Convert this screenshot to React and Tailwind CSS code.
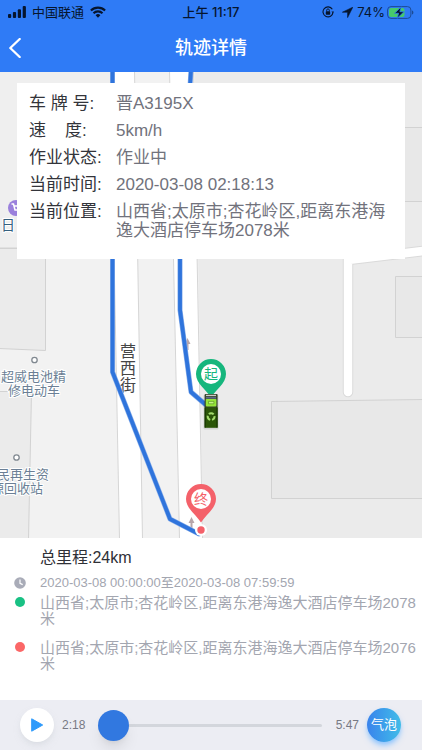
import React from 'react';

const FONT = 'font-["Liberation_Sans","Noto_Sans_CJK_SC",sans-serif]';

const DETAILS = [
  { label: '车 牌 号:', value: '晋A3195X' },
  { label: '速\u00a0\u00a0\u00a0\u00a0度:', value: '5km/h' },
  { label: '作业状态:', value: '作业中' },
  { label: '当前时间:', value: '2020-03-08 02:18:13' },
  { label: '当前位置:', value: '山西省;太原市;杏花岭区,距离东港海逸大酒店停车场2078米' },
];

const STOPS = [
  { dot: 'bg-[#19c184]', address: '山西省;太原市;杏花岭区,距离东港海逸大酒店停车场2078米' },
  { dot: 'bg-[#fb6767]', address: '山西省;太原市;杏花岭区,距离东港海逸大酒店停车场2076米' },
];

function StatusBar() {
  return (
    <div className='h-6 px-2 grid grid-cols-[1fr_auto_1fr] items-center font-["Inter","Noto_Sans_CJK_SC",sans-serif] text-[13px] leading-6 text-[#06152e]'>
      <div className="flex items-center gap-1.5">
        <svg className="w-[18px] h-3" viewBox="0 0 18 12" fill="#06152e">
          <rect x="0" y="8" width="3.2" height="4" rx="1" />
          <rect x="4.9" y="6" width="3.2" height="6" rx="1" />
          <rect x="9.8" y="3.2" width="3.2" height="8.8" rx="1" />
          <rect x="14.7" y="0" width="3.2" height="12" rx="1" />
        </svg>
        <span>中国联通</span>
        <svg className="w-4 h-3" viewBox="0 0 16 12" fill="none" stroke="#06152e" strokeWidth="2.1">
          <path d="M.9 4.5a10.1 10.1 0 0 1 14.2 0" />
          <path d="M3.5 7.2a6.4 6.4 0 0 1 9 0" />
          <path d="M8 11.8 5.6 9.3a3.4 3.4 0 0 1 4.8 0z" fill="#06152e" stroke="none" />
        </svg>
      </div>
      <div className="font-medium">上午 11:17</div>
      <div className="flex items-center justify-end">
        <svg className="w-3 h-3 mr-2" viewBox="0 0 12 12" fill="none" stroke="#06152e" strokeWidth="1.1">
          <path d="M10.3 3.3A5 5 0 1 0 11 6.4" />
          <path d="M9.4 5.6 11 7.3l1-1.9z" fill="#06152e" stroke="none" />
          <rect x="3.8" y="5.3" width="4.4" height="3.4" rx=".6" fill="#06152e" stroke="none" />
          <path d="M4.7 5.4V4.2a1.3 1.3 0 0 1 2.6 0v1.2" strokeWidth=".9" />
        </svg>
        <svg className="w-[11px] h-[11px] mr-1" viewBox="0 0 11 11" fill="#06152e">
          <path d="M10.8.2.4 5.2h5.2v5.4z" stroke="#06152e" strokeWidth=".6" strokeLinejoin="round" />
        </svg>
        <span>74%</span>
        <svg className="w-[27px] h-[13px] ml-0.5" viewBox="0 0 27 13">
          <rect x=".6" y=".6" width="23.3" height="11.8" rx="3.4" fill="none" stroke="#1c4b94" strokeWidth="1" />
          <rect x="2" y="2" width="15.5" height="9" rx="2" fill="#47c96b" />
          <path d="M25 4.4v4.2c.9-.3 1.4-1.1 1.4-2.1S25.9 4.7 25 4.4z" fill="#1c4b94" />
          <path d="M14.2.8 7.6 7.3h4l-1.4 5 6.8-6.6h-4.1z" fill="#06152e" stroke="#2f7bf6" strokeWidth=".8" />
        </svg>
      </div>
    </div>
  );
}

function TitleBar() {
  return (
    <div className="h-12 grid grid-cols-[1fr_auto_1fr] items-center text-white">
      <button aria-label="返回" className="w-8 h-8 flex items-center justify-start pl-[9px]">
        <svg className="w-3 h-5" viewBox="0 0 12 20" fill="none" stroke="currentColor" strokeWidth="2.3" strokeLinecap="round" strokeLinejoin="round">
          <path d="M10.7 1 1.3 10l9.4 9" />
        </svg>
      </button>
      <h1 className="text-lg leading-6 font-medium">轨迹详情</h1>
    </div>
  );
}

function Pin({ x, y, color, children }) {
  return (
    <g transform={`translate(${x} ${y})`}>
      <path d="M0 23.5C-4.5 16-15 9.5-15 0a15 15 0 0 1 30 0C15 9.5 4.5 16 0 23.5z" fill={color} />
      <circle r="10" fill="#fff" />
      <text y="5" fontSize="14" textAnchor="middle" fill={color}>{children}</text>
    </g>
  );
}

function Truck() {
  return (
    <g transform="translate(204 394)">
      <rect x="-.5" y=".5" width="15" height="35" rx="1.5" fill="#000" opacity=".1" />
      <rect x=".6" y="0" width="13" height="14" rx="1" fill="#39452f" />
      <rect x="2" y=".8" width="10" height="1.3" fill="#c9cfc4" />
      <rect x="2" y="3" width="10" height="1.6" fill="#5a6a86" />
      <rect x="1.8" y="5" width="10.6" height="7.4" rx=".8" fill="#96e63a" />
      <path d="M4.5 7.4h5.4v2.4H4.5z" fill="#c4f584" stroke="#4f8d16" strokeWidth=".6" />
      <rect x=".6" y="13.4" width="13" height="20.4" fill="#2b5508" />
      <path d="M1.2 13.4v20M13 13.4v20" stroke="#183603" strokeWidth="1.2" />
      <circle cx="7.1" cy="22.6" r="3.4" fill="none" stroke="#a3dc6c" strokeWidth="2" strokeDasharray="5.2 1.9" strokeDashoffset="1" />
    </g>
  );
}

function TrackMap() {
  return (
    <svg className="absolute inset-0 w-full h-full" viewBox="0 72 422 466" preserveAspectRatio="xMidYMid slice" role="img" aria-label="轨迹地图">
      <rect y="72" width="422" height="466" fill="#f2f2f2" />
      <path d="M195 72H422V538H203z" fill="#ebebeb" />

      {/* buildings */}
      <g fill="#ebebeb" stroke="#d2d2d2">
        <path d="M-1 71H111V248H-1z" fill="#efefef" />
        <path d="M-1 248.500H45.500V350.500L-1 348.500z" />
        <path d="M-1 391.500H31.500L28.500 540H-1z" />
        <path d="M380 127.500H423V201.500H380z" fill="#e8e8e8" />
        <path d="M395.500 276.500H423V337.500H395.500z" fill="#e8e8e8" />
        <path d="M271.500 401.500L423 399.500V498.500H271.500z" fill="#e8e8e8" />
      </g>

      {/* roads */}
      <g fill="#fff" stroke="#d6d6d6">
        <path d="M110.500 71H134.500L142.500 539H119.500z" />
        <path d="M169.500 71H193.500L202.500 539H179.500z" />
      </g>
      <path d="M423 251L348 260V392" fill="none" stroke="#dadada" strokeWidth="10.500" strokeLinecap="round" />
      <path d="M423 251L348 260V392" fill="none" stroke="#fff" strokeWidth="8.500" strokeLinecap="round" />
      <g fill="#b7a5aa">
        <path d="M187.500 338l3 6h-2v6h-2v-6h-2zM191.500 517l3 6h-2v6h-2v-6h-2z" />
      </g>

      {/* places */}
      <g fontSize="13" fill="#6b7f95" stroke="#fff" strokeWidth="2" paintOrder="stroke">
        <text x="1" y="381">超威电池精</text>
        <text x="8" y="395">修电动车</text>
        <text x="49" y="479" textAnchor="end">民再生资</text>
        <text x="43" y="493" textAnchor="end">源回收站</text>
        <text x="1" y="230" fontSize="14" fill="#35607f">日</text>
      </g>
      <g fill="#fff" stroke="#808890" strokeWidth="1.300">
        <circle cx="34.500" cy="360" r="2.700" />
        <circle cx="16.500" cy="457.500" r="2.700" />
      </g>
      <circle cx="16" cy="208" r="8" fill="#9a80dc" />
      <path d="M11.500 204h2l1.500 6h5M14 206h6" fill="none" stroke="#fff" strokeWidth="1.500" />
      <g fontSize="16" fill="#454545" stroke="#fff" strokeWidth="2" paintOrder="stroke" textAnchor="middle">
        <text x="128" y="357">营</text>
        <text x="128" y="374">西</text>
        <text x="128" y="391">街</text>
      </g>

      {/* driven track */}
      <g fill="none" strokeLinejoin="round" strokeLinecap="round">
        <path d="M112.500 70V372L170 519L199 534M191 70L180 250V310L191 392L206 405" stroke="#8bb0ea" strokeWidth="5" />
        <path d="M112.500 70V372L170 519L199 534M191 70L180 250V310L191 392L206 405" stroke="#2f74dc" strokeWidth="3.800" />
      </g>

      <Pin x={211} y={374} color="#16b67d">起</Pin>
      <Truck />
      <circle cx="201" cy="530" r="6" fill="#fff" />
      <circle cx="201" cy="530" r="3.700" fill="#f4616a" />
      <Pin x={201} y={499} color="#f4616a">终</Pin>
    </svg>
  );
}

function DetailCard() {
  return (
    <dl className="relative mx-[17px] mt-[11px] pt-[11px] pb-[19px] pl-3 pr-4 flex flex-col gap-2 bg-white text-[17px] leading-[19px]">
      {DETAILS.map(({ label, value }) => (
        <div key={label} className="flex">
          <dt className="w-[87px] shrink-0 text-[#33343a] whitespace-nowrap">{label}</dt>
          <dd className="text-[#71727c] break-all">{value}</dd>
        </div>
      ))}
    </dl>
  );
}

function Summary() {
  return (
    <section className="h-[162px] pt-[11px] pl-3.5 bg-white text-[#a3a6b0]">
      <h2 className="pl-[26px] text-base leading-[18px] text-[#2f3036]">总里程:24km</h2>
      <div className="mt-2 flex items-center text-[13px] leading-4">
        <span className="w-[26px] shrink-0">
          <svg className="w-3 h-3" viewBox="0 0 12 12">
            <circle cx="6" cy="6" r="5.800" fill="#a9acb8" />
            <path d="M6 2.500V6.300L8.700 7.600" fill="none" stroke="#fff" strokeWidth="1.200" />
          </svg>
        </span>
        <span>2020-03-08 00:00:00至2020-03-08 07:59:59</span>
      </div>
      <ul className="mt-1 flex flex-col gap-[13px] text-[15px] leading-4">
        {STOPS.map(({ dot, address }) => (
          <li key={address} className="flex">
            <span className="w-[26px] shrink-0 pt-0.5 pl-px">
              <span className={`block w-2.5 h-2.5 rounded-full ${dot}`} />
            </span>
            <span className="pr-1 break-all">{address}</span>
          </li>
        ))}
      </ul>
    </section>
  );
}

function Player() {
  return (
    <footer className="h-[50px] pl-5 pr-[21px] flex items-center bg-[#ecedf3] text-xs text-[#777983]">
      <button aria-label="播放" className="w-[34px] h-[34px] shrink-0 rounded-full bg-white shadow-md shadow-gray-300/50 flex items-center justify-center">
        <svg className="w-3 h-3.5" viewBox="0 0 12 14" fill="#2f9bfb" stroke="#2f9bfb" strokeWidth="1" strokeLinejoin="round">
          <path d="M.7.8v12.400L11.700 7z" />
        </svg>
      </button>
      <span className="ml-2 w-9">2:18</span>
      <input
        type="range"
        aria-label="播放进度"
        min="0"
        max="100"
        defaultValue="0"
        className="min-w-0 flex-1 h-8 appearance-none bg-transparent [&::-webkit-slider-runnable-track]:h-[3px] [&::-webkit-slider-runnable-track]:rounded-full [&::-webkit-slider-runnable-track]:bg-[#d3d6dc] [&::-webkit-slider-thumb]:appearance-none [&::-webkit-slider-thumb]:-mt-3.5 [&::-webkit-slider-thumb]:w-[31px] [&::-webkit-slider-thumb]:h-[31px] [&::-webkit-slider-thumb]:rounded-full [&::-webkit-slider-thumb]:bg-[#3178e0] [&::-webkit-slider-thumb]:shadow-lg"
      />
      <span className="ml-3.5">5:47</span>
      <button className="ml-2 w-[34px] h-[34px] shrink-0 rounded-full bg-linear-to-r from-[#3a83ec] to-[#42bce8] shadow-md shadow-blue-300 text-[13px] text-white">气泡</button>
    </footer>
  );
}

export default function App() {
  return (
    <div className={`min-h-screen flex flex-col bg-white ${FONT}`}>
      <header className="bg-[#2f7bf6]">
        <StatusBar />
        <TitleBar />
      </header>
      <main className="relative flex-1 min-h-[466px] flow-root overflow-hidden">
        <TrackMap />
        <DetailCard />
      </main>
      <Summary />
      <Player />
    </div>
  );
}
